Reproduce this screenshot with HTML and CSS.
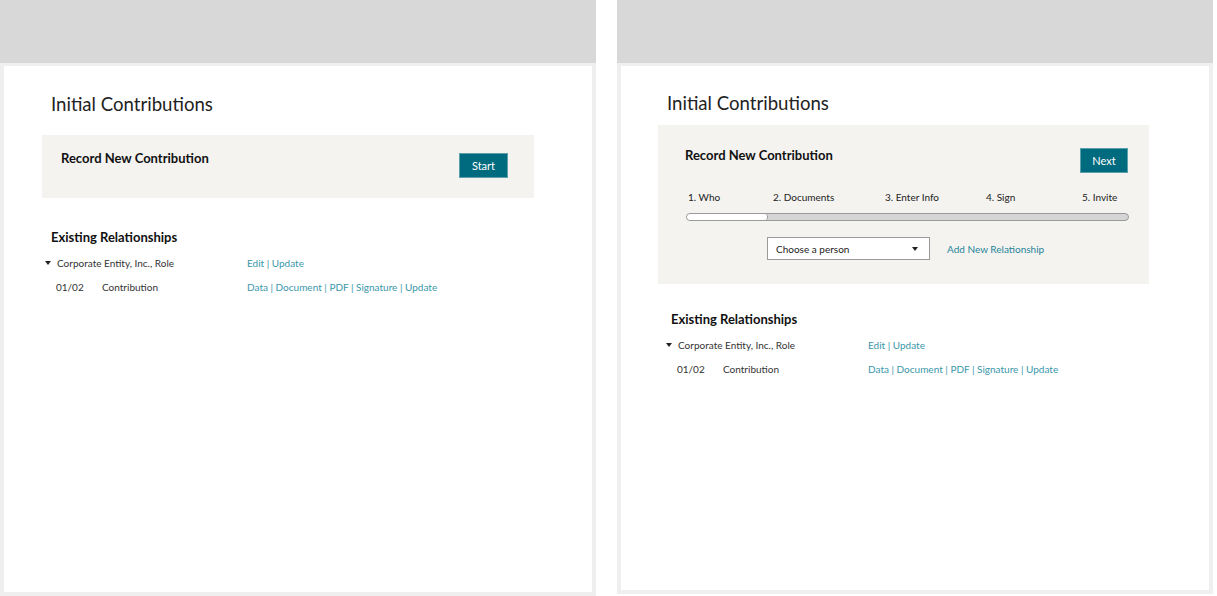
FILE: index.html
```html
<!DOCTYPE html>
<html lang="en">
<head>
<meta charset="utf-8">
<title>Initial Contributions</title>
<link rel="stylesheet" href="styles.css">
</head>
<body>
<div class="screens">
  <section class="panel">
    <div class="panel-head"></div>
    <div class="panel-body">
      <h1 class="title">Initial Contributions</h1>
      <div class="card">
        <h2 class="card-title">Record New Contribution</h2>
        <button class="btn">Start</button>
      </div>
      <h2 class="section-title">Existing Relationships</h2>
      <div class="rel-table">
        <div class="rel-name"><span class="caret"></span>Corporate Entity, Inc., Role</div>
        <div class="rel-links"><a href="#">Edit</a> | <a href="#">Update</a></div>
        <div class="rel-item"><span class="rel-date">01/02</span>Contribution</div>
        <div class="rel-links"><a href="#">Data</a> | <a href="#">Document</a> | <a href="#">PDF</a> | <a href="#">Signature</a> | <a href="#">Update</a></div>
      </div>
    </div>
  </section>

  <section class="panel panel-right">
    <div class="panel-head"></div>
    <div class="panel-body">
      <h1 class="title">Initial Contributions</h1>
      <div class="card card-wizard">
        <div class="wizard-top">
          <h2 class="card-title">Record New Contribution</h2>
          <button class="btn">Next</button>
        </div>
        <div class="steps">
          <span>1. Who</span>
          <span>2. Documents</span>
          <span>3. Enter Info</span>
          <span>4. Sign</span>
          <span>5. Invite</span>
        </div>
        <div class="progress"><div class="progress-fill" style="width:81px"></div></div>
        <div class="chooser">
          <div class="select"><span>Choose a person</span><span class="select-caret"></span></div>
          <a href="#" class="add-link">Add New Relationship</a>
        </div>
      </div>
      <h2 class="section-title">Existing Relationships</h2>
      <div class="rel-table">
        <div class="rel-name"><span class="caret"></span>Corporate Entity, Inc., Role</div>
        <div class="rel-links"><a href="#">Edit</a> | <a href="#">Update</a></div>
        <div class="rel-item"><span class="rel-date">01/02</span>Contribution</div>
        <div class="rel-links"><a href="#">Data</a> | <a href="#">Document</a> | <a href="#">PDF</a> | <a href="#">Signature</a> | <a href="#">Update</a></div>
      </div>
    </div>
  </section>
</div>
</body>
</html>
```

FILE: styles.css
```css
* { box-sizing: border-box; }

html, body {
  margin: 0;
  padding: 0;
  background: #ffffff;
}

body {
  font-family: Lato, "Noto Sans", sans-serif;
  color: #222222;
  overflow: hidden;
}

.screens {
  display: flex;
  align-items: flex-start;
  gap: 21px;
  width: 1217px;
  height: 596px;
}

.panel {
  width: 596px;
  height: 596px;
  display: flex;
  flex-direction: column;
}

.panel-right {
  height: 594px;
}

.panel-head {
  height: 63px;
  background: #d8d8d8;
  flex: none;
}

.panel-body {
  flex: 1;
  border: 4px solid #efefef;
  border-top-width: 3px;
  padding: 26px 0 0 0;
}

.title {
  margin: 0 0 0 47px;
  font-size: 18.6px;
  font-weight: 400;
  line-height: 24px;
  color: #222;
}

.card {
  margin: 19px 0 0 38px;
  width: 492px;
  height: 63px;
  background: #f4f3f0;
  padding: 15px 26px 0 19px;
  display: flex;
  justify-content: space-between;
  align-items: flex-start;
}

.card-title {
  margin: 0;
  font-size: 13px;
  font-weight: 700;
  line-height: 16px;
  color: #111;
}

.btn {
  margin-top: 3px;
  width: 49px;
  height: 25px;
  background: #006b7e;
  border: 1px solid #5d9eab;
  color: #ffffff;
  font-family: inherit;
  font-size: 11px;
  padding: 0;
}

.section-title {
  margin: 31px 0 0 47px;
  font-size: 13px;
  font-weight: 700;
  line-height: 16px;
  color: #111;
}

.rel-table {
  margin: 6px 0 0 41px;
  display: grid;
  grid-template-columns: 202px auto;
  grid-auto-rows: 24px;
  align-items: center;
  font-size: 10px;
  color: #333;
}

.rel-name {
  display: flex;
  align-items: center;
}

.caret {
  width: 0;
  height: 0;
  border-left: 3px solid transparent;
  border-right: 3px solid transparent;
  border-top: 4px solid #222;
  margin-right: 6px;
}

.rel-item {
  padding-left: 11px;
}

.rel-date {
  display: inline-block;
  width: 46px;
}

.rel-links {
  color: #3a97aa;
}

.rel-links a {
  color: #3a97aa;
  text-decoration: none;
}

/* right panel */
.panel-right .panel-body {
  padding-top: 25px;
}

.panel-right .title {
  margin-left: 46px;
}

.card-wizard {
  display: block;
  margin: 10px 0 0 37px;
  width: 491px;
  height: 159px;
  padding: 22px 21px 0 27px;
}

.wizard-top {
  display: flex;
  justify-content: space-between;
  align-items: flex-start;
}

.wizard-top .btn {
  margin-top: 1px;
  width: 48px;
}

.steps {
  margin-top: 17px;
  padding-left: 3px;
  display: grid;
  grid-template-columns: 85px 112px 101px 96px auto;
  font-size: 10px;
  line-height: 14px;
  color: #222;
}

.progress {
  margin: 9px 0 0 1px;
  width: 443px;
  height: 8px;
  border: 1px solid #9a9a9a;
  border-radius: 4px;
  background: #d5d5d5;
  overflow: hidden;
}

.progress-fill {
  height: 100%;
  background: #ffffff;
  border-right: 1px solid #9a9a9a;
  border-radius: 4px;
}

.chooser {
  margin: 16px 0 0 82px;
  display: flex;
  align-items: center;
  gap: 17px;
}

.select {
  width: 163px;
  height: 23px;
  background: #ffffff;
  border: 1px solid #9a9a9a;
  display: flex;
  align-items: center;
  justify-content: space-between;
  padding: 0 11px 0 8px;
  font-size: 10px;
  color: #222;
}

.select-caret {
  width: 0;
  height: 0;
  border-left: 3px solid transparent;
  border-right: 3px solid transparent;
  border-top: 4px solid #222;
}

.add-link {
  font-size: 10px;
  color: #1f8598;
  text-decoration: none;
}

.panel-right .section-title {
  margin-top: 27px;
  margin-left: 50px;
}

.panel-right .rel-table {
  margin-left: 45px;
}
```
